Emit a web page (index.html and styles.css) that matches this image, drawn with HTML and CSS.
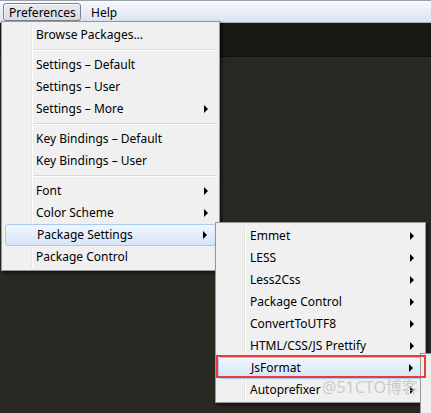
FILE: index.html
```html
<!DOCTYPE html>
<html>
<head>
<meta charset="utf-8">
<link rel="stylesheet" href="styles.css">
</head>
<body>
<div class="screen">
  <div class="menubar">
    <span class="top-item open">Preferences</span>
    <span class="top-item">Help</span>
  </div>
  <div class="editor">
    <div class="tabbar"></div>
    <div class="code"></div>
  </div>

  <div class="menu main-menu">
    <div class="item">Browse Packages...</div>
    <div class="sep"></div>
    <div class="item">Settings – Default</div>
    <div class="item">Settings – User</div>
    <div class="item sub">Settings – More</div>
    <div class="sep"></div>
    <div class="item">Key Bindings – Default</div>
    <div class="item">Key Bindings – User</div>
    <div class="sep"></div>
    <div class="item sub">Font</div>
    <div class="item sub">Color Scheme</div>
    <div class="item sub hot">Package Settings</div>
    <div class="item">Package Control</div>
  </div>

  <div class="menu sub-menu">
    <div class="item sub">Emmet</div>
    <div class="item sub">LESS</div>
    <div class="item sub">Less2Css</div>
    <div class="item sub">Package Control</div>
    <div class="item sub">ConvertToUTF8</div>
    <div class="item sub">HTML/CSS/JS Prettify</div>
    <div class="item sub hot">JsFormat</div>
    <div class="item sub">Autoprefixer</div>
  </div>

  <div class="menu third-menu"></div>
  <div class="redbox"></div>
  <div class="watermark">@51CTO博客</div>
</div>
</body>
</html>
```
FILE: styles.css
```css
html, body {
  margin: 0;
  padding: 0;
}
body {
  width: 431px;
  height: 413px;
  overflow: hidden;
  font-family: "Noto Sans", "Open Sans", sans-serif;
  font-size: 12px;
  color: #000;
}
.screen {
  position: relative;
  width: 431px;
  height: 413px;
  overflow: hidden;
  background: #272822;
  display: flex;
  flex-direction: column;
}
.menubar {
  border-top: 1px solid #9aa0aa;
  border-bottom: 1px solid #a9b1c2;
  background: linear-gradient(#f7f9fd, #e9edf7 50%, #dbe2f1);
  display: flex;
  align-items: center;
  padding-left: 3px;
  gap: 2px;
  box-sizing: border-box;
  height: 23px;
}
.top-item {
  padding: 0 5px;
  height: 18px;
  line-height: 17px;
  box-sizing: border-box;
  border: 1px solid transparent;
}
.top-item.open {
  border-color: #7f8288;
  border-radius: 3px;
  background: linear-gradient(#e6e9ee, #d7dbe2);
  box-shadow: inset 1px 1px 0 rgba(255,255,255,.6);
  width: 78px;
}
.top-item + .top-item {
  margin-left: 2px;
}
.editor {
  flex: 1;
  display: flex;
  flex-direction: column;
}
.tabbar {
  height: 33px;
  background: #171813;
  border-bottom: 1px solid #0f100c;
}
.code {
  flex: 1;
  background: #282923;
}
.menu {
  position: absolute;
  background: #f0f0f0;
  border: 1px solid #979797;
  box-sizing: border-box;
  padding: 2px 2px;
  box-shadow: 2px 2px 3px rgba(0,0,0,.55);
}
.menu::before {
  content: "";
  position: absolute;
  top: 2px;
  bottom: 2px;
  left: 29px;
  width: 1px;
  background: #e2e3e3;
  border-right: 1px solid #ffffff;
}
.main-menu {
  left: 1px;
  top: 21px;
  width: 219px;
  height: 250px;
}
.sub-menu {
  left: 215px;
  top: 222px;
  width: 211px;
  height: 181px;
}
.sub-menu::before {
  left: 28px;
}
.third-menu {
  left: 420px;
  top: 353px;
  width: 11px;
  height: 60px;
  padding: 0;
  border-right: none;
  border-bottom: none;
  box-shadow: none;
}
.third-menu::before {
  display: none;
}
.item {
  position: relative;
  height: 22px;
  line-height: 22px;
  padding-left: 32px;
  white-space: nowrap;
  color: #000;
}
.item.sub::after {
  content: "";
  position: absolute;
  right: 9px;
  top: 7px;
  border-left: 4px solid #000;
  border-top: 4px solid transparent;
  border-bottom: 4px solid transparent;
}
.item.hot {
  border: 1px solid #a8c9f0;
  border-radius: 3px;
  background: linear-gradient(#f1f6fd, #e1ebf9 60%, #d6e4f7);
  line-height: 20px;
  height: 22px;
  box-sizing: border-box;
  padding-left: 31px;
  margin-left: 1px;
  margin-right: 1px;
}
.item.hot::after {
  right: 8px;
  top: 6px;
}
.sub-menu .item.hot {
  margin-left: 0;
  padding-left: 32px;
}
.sep {
  height: 1px;
  margin: 3px 0 3px 30px;
  background: #d7d7d7;
  border-bottom: 1px solid #ffffff;
}
.redbox {
  position: absolute;
  left: 216px;
  top: 355px;
  width: 210px;
  height: 23px;
  border: 2px solid #ee3a36;
  box-sizing: border-box;
}
.watermark {
  position: absolute;
  left: 322px;
  top: 376px;
  font-family: "Noto Sans", "Noto Sans CJK SC", sans-serif;
  font-size: 16px;
  line-height: 22px;
  color: rgba(185,185,185,.7);
  white-space: nowrap;
}
```
